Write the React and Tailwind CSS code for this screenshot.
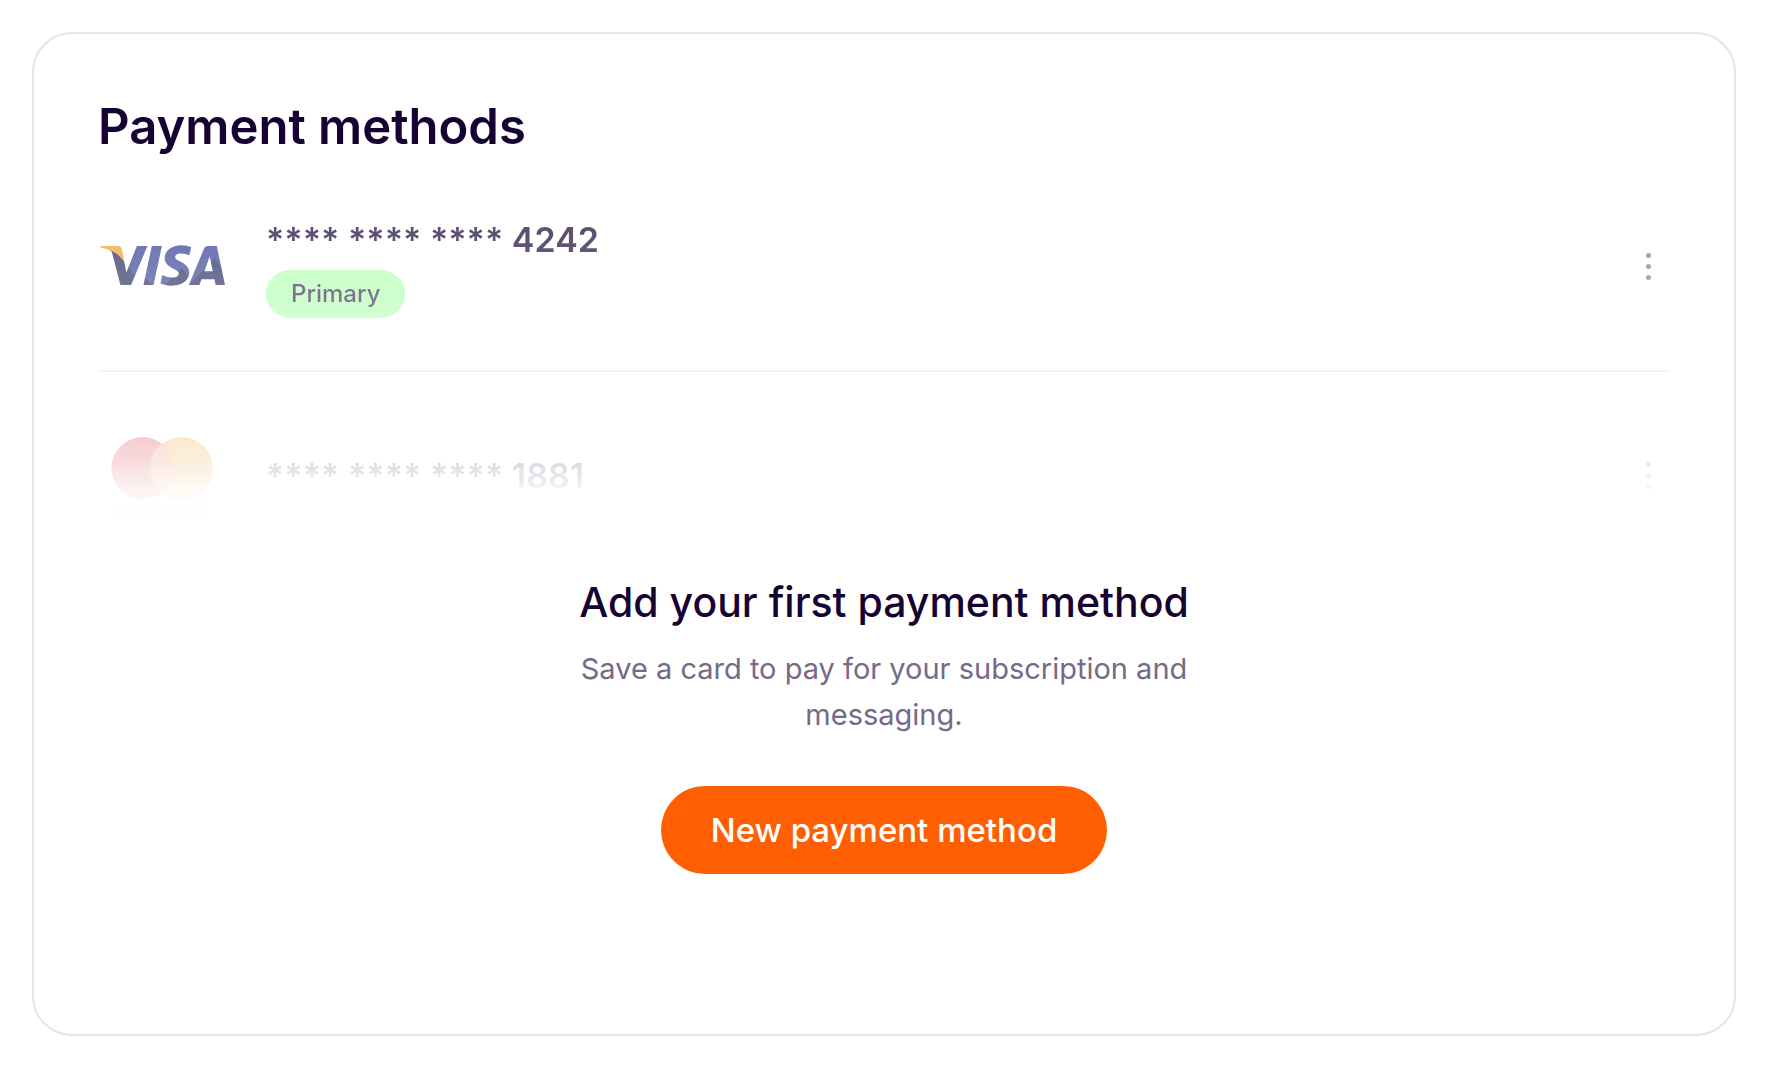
import { SiVisa } from 'react-icons/si';

function VisaLogo() {
  return (
    <svg viewBox="0 0 128 80" className="w-32 h-20" role="img" aria-label="Visa">
      <defs>
        <mask id="visa-mask" maskUnits="userSpaceOnUse" x="0" y="0" width="128" height="80" style={{ maskType: 'alpha' }}>
          <SiVisa x="2" y="-23" size={125} />
        </mask>
      </defs>
      <g mask="url(#visa-mask)">
        <rect width="128" height="80" fill="#2f3a91" />
        <path
          d="M0 19 L14 21 L27 36 L36 49 L46 41 V51 L57 61 H65 L84 42 L89 49 V61 L117 32 L128 48 V61 H0 Z"
          fill="#1c2259"
        />
        <path d="M0 16 H23 L27 37 C22 29 15 23 0 22 Z" fill="#f2992a" />
      </g>
    </svg>
  );
}

function MastercardLogo() {
  return (
    <svg viewBox="0 0 128 96" className="w-32 h-24" role="img" aria-label="Mastercard">
      <circle cx="44.7" cy="40.3" r="31.3" fill="#d8141c" />
      <circle cx="83.6" cy="40.3" r="31.3" fill="#e8961a" />
      <path d="M64.15 15.8 a31.3 31.3 0 0 1 0 49 a31.3 31.3 0 0 1 0 -49" fill="#f0703c" />
      <text x="65" y="88" textAnchor="middle" fontSize="19" fill="#6a6a6a" fontFamily="Lato">
        mastercard.
      </text>
    </svg>
  );
}

function MenuButton({ label }) {
  return (
    <button type="button" aria-label={label} className="flex w-[43px] flex-col items-center gap-1.5 py-4">
      <span className="size-[5px] rounded-full bg-[#7d7090]" />
      <span className="size-[5px] rounded-full bg-[#7d7090]" />
      <span className="size-[5px] rounded-full bg-[#7d7090]" />
    </button>
  );
}

function CardRow({ logo, last4, primary }) {
  return (
    <li className="flex h-[210px] items-center gap-10 border-b-2 border-[#e5e4e9] last:h-[207px] last:border-b-0">
      {logo}
      <div className="flex flex-1 flex-col items-start gap-1">
        <p className="text-[34px]/[52px] font-semibold">**** **** **** {last4}</p>
        {primary && (
          <span className="rounded-full bg-[#adffad] px-[25px] text-2xl/[48px] font-medium text-[#2d1b48]">
            Primary
          </span>
        )}
      </div>
      <MenuButton label={`Options for card ending in ${last4}`} />
    </li>
  );
}

export default function App() {
  return (
    <main className="flex min-h-screen bg-white pt-8 pr-[34px] pb-[34px] pl-8 font-['Inter',sans-serif] text-[#160333]">
      <section className="flex-1 rounded-[40px] border-2 border-[#e5e4ea] px-16 pt-16 pb-36">
        <h1 className="text-[49px]/[58px] font-semibold">Payment methods</h1>
        <ul className="mt-1.5 h-[370px] overflow-hidden mask-[linear-gradient(to_bottom,rgb(0_0_0/0.72)_0,rgb(0_0_0/0.69)_80px,rgb(0_0_0/0.6)_140px,rgb(0_0_0/0.22)_275px,rgb(0_0_0/0.15)_300px,rgb(0_0_0/0.06)_325px,rgb(0_0_0/0.02)_345px,transparent_370px)]">
          <CardRow logo={<VisaLogo />} last4="4242" primary />
          <CardRow logo={<MastercardLogo />} last4="1881" />
        </ul>
        <div className="mx-auto mt-[42px] flex max-w-[640px] flex-col items-center text-center">
          <h2 className="text-[41px]/[56px] font-medium">Add your first payment method</h2>
          <p className="mt-4 text-[29px]/[46px] text-[#756a88]">
            Save a card to pay for your subscription and messaging.
          </p>
          <button
            type="button"
            className="mt-12 rounded-full bg-[#ff5f00] px-[50px] text-[33px]/[88px] font-medium text-white"
          >
            New payment method
          </button>
        </div>
      </section>
    </main>
  );
}
